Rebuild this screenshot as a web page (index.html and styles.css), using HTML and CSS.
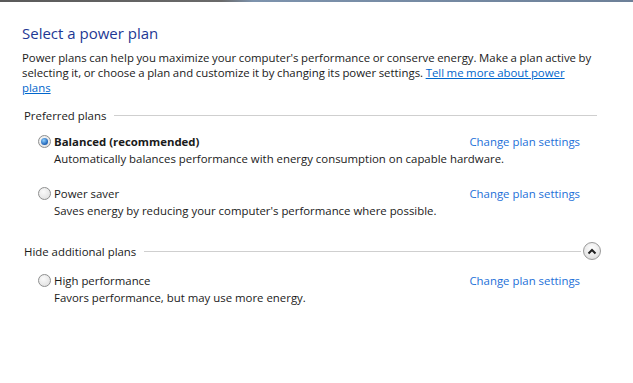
FILE: index.html
```html
<!DOCTYPE html>
<html lang="en">
<head>
    <meta charset="UTF-8">
    <title>Select a power plan</title>
    <link rel="stylesheet" href="styles.css">
</head>
<body>
    <div class="window">
        <div class="content">
            <h1 class="title">Select a power plan</h1>
            <p class="intro">Power plans can help you maximize your computer's performance or conserve energy. Make a plan active by selecting it, or choose a plan and customize it by changing its power settings. <a href="#" class="help-link">Tell me more about power plans</a></p>

            <!-- 優先プラン -->
            <div class="group-head">
                <span class="group-label">Preferred plans</span>
                <span class="group-line"></span>
            </div>

            <div class="plan">
                <div class="plan-row">
                    <span class="radio checked"></span>
                    <span class="plan-name bold">Balanced (recommended)</span>
                    <a href="#" class="plan-link">Change plan settings</a>
                </div>
                <div class="plan-desc">Automatically balances performance with energy consumption on capable hardware.</div>
            </div>

            <div class="plan">
                <div class="plan-row">
                    <span class="radio"></span>
                    <span class="plan-name">Power saver</span>
                    <a href="#" class="plan-link">Change plan settings</a>
                </div>
                <div class="plan-desc">Saves energy by reducing your computer's performance where possible.</div>
            </div>

            <!-- 追加プラン -->
            <div class="group-head extra">
                <span class="group-label">Hide additional plans</span>
                <span class="group-line"></span>
                <span class="toggle">
                    <svg width="10" height="7" viewBox="0 0 10 7"><path d="M1.5 5.5 L5 2 L8.5 5.5" fill="none" stroke="#222" stroke-width="2"/></svg>
                </span>
            </div>

            <div class="plan">
                <div class="plan-row">
                    <span class="radio"></span>
                    <span class="plan-name">High performance</span>
                    <a href="#" class="plan-link">Change plan settings</a>
                </div>
                <div class="plan-desc">Favors performance, but may use more energy.</div>
            </div>
        </div>
    </div>
</body>
</html>
```

FILE: styles.css
```css
/* 基本スタイル */
body {
    margin: 0;
    background-color: #fff;
    font-family: 'Open Sans', 'Noto Sans', sans-serif;
    font-size: 11.4px;
    color: #1a1a1a;
}

.window {
    width: 633px;
    height: 383px;
    box-sizing: border-box;
    border-top: 2px solid #6b7a8c;
    border-image: linear-gradient(to right, #5a5a5a, #6a6a6a 35%, #7d93ad 40%, #6d8098) 1;
    border-right: 0;
    border-left: 0;
    border-bottom: 0;
}

.content {
    padding: 20px 36px 0 22px;
}

.title {
    margin: 0;
    font-size: 15px;
    font-weight: normal;
    color: #1e3894;
    line-height: 22px;
}

.intro {
    margin: 6px 0 0;
    max-width: 572px;
    line-height: 15px;
    word-spacing: -0.4px;
}

.help-link {
    color: #0066cc;
}

.group-head {
    display: flex;
    align-items: center;
    margin: 11px 0 0 2px;
    height: 18px;
}

.group-label {
    margin-right: 8px;
}

.group-line {
    flex: 1;
    border-top: 1px solid #cfcfcf;
}

.extra {
    margin-top: 23px;
}

.toggle {
    width: 16px;
    height: 16px;
    margin-left: 2px;
    margin-right: -4px;
    border-radius: 50%;
    border: 1px solid #9a9a9a;
    background: radial-gradient(circle at 50% 35%, #ffffff, #e4e4e4 70%, #cfcfcf);
    display: flex;
    align-items: center;
    justify-content: center;
}

.plan {
    margin: 9px 0 0 16px;
}

.plan + .plan {
    margin-top: 18px;
}

.extra + .plan {
    margin-top: 12px;
}

.plan-row {
    display: flex;
    align-items: center;
    height: 17px;
}

.radio {
    width: 11px;
    height: 11px;
    border-radius: 50%;
    border: 1px solid #8e8f8f;
    background: radial-gradient(circle at 40% 35%, #fafafa, #dcdcdc);
    margin-right: 3px;
    position: relative;
}

.radio.checked::after {
    content: '';
    position: absolute;
    left: 2px;
    top: 2px;
    width: 7px;
    height: 7px;
    border-radius: 50%;
    background: radial-gradient(circle at 40% 35%, #8fd0ff, #1a5fb4 70%);
}

.bold {
    font-weight: bold;
}

.plan-link {
    margin-left: auto;
    margin-right: 17px;
    color: #1d6fd8;
    text-decoration: none;
}

.plan-desc {
    margin: 0 0 0 16px;
    line-height: 17px;
}
```
